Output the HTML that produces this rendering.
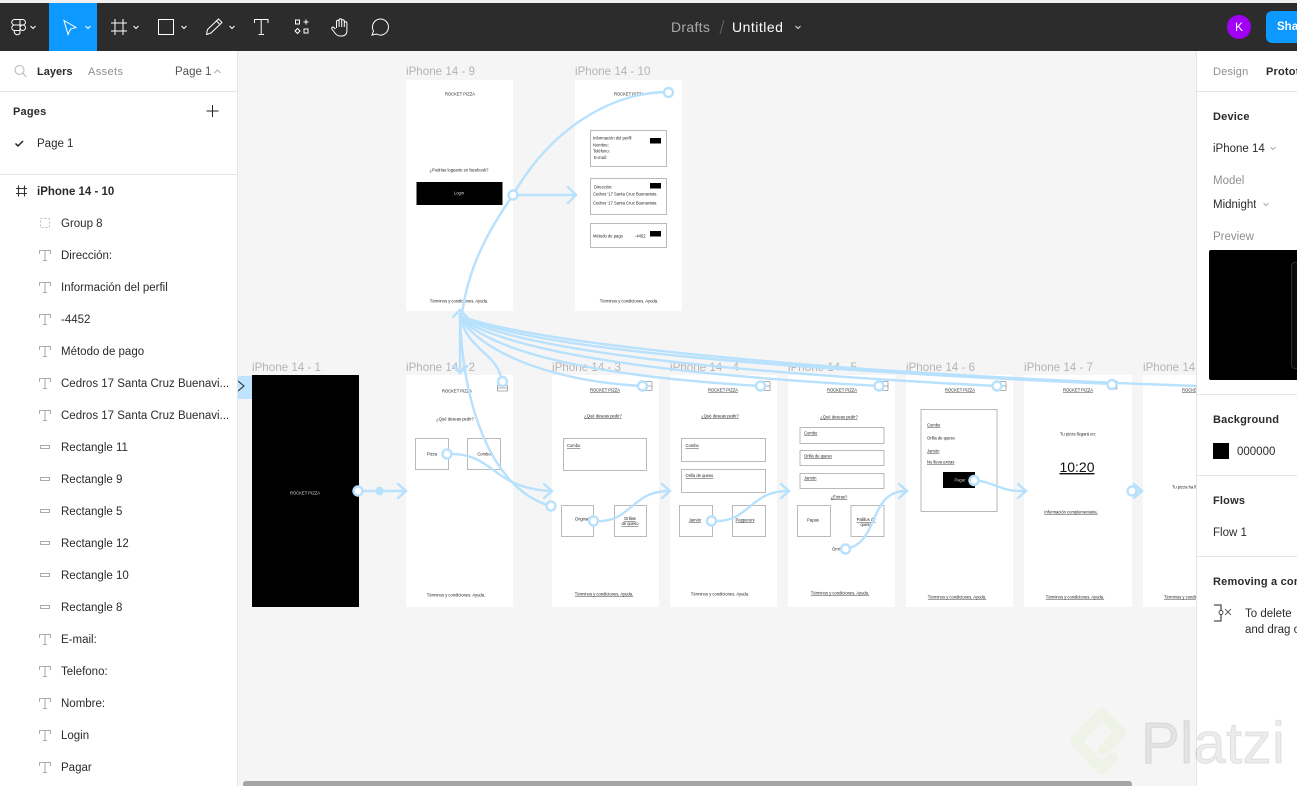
<!DOCTYPE html>
<html><head><meta charset="utf-8"><title>Untitled</title>
<style>
*{box-sizing:border-box}
html,body{margin:0;padding:0;width:1297px;height:786px;overflow:hidden;background:#f5f5f5;font-family:"Liberation Sans",sans-serif}
.a{position:absolute;white-space:nowrap;line-height:16px;font-size:11.5px;color:#2b2b2b;overflow:hidden}
.b{font-weight:bold;letter-spacing:.2px;font-size:11px}
.g{color:#8f8f8f}
.line{position:absolute;height:1px;background:#e5e5e5}
svg{position:absolute;left:0;top:0}
#c text{font-family:"Liberation Sans",sans-serif;font-size:4.15px;fill:#1c1c1c}
#c .m{text-anchor:middle}
#c .u{text-decoration:underline}
#c .l{font-size:11.6px;fill:#b4b4b4}
#c rect.f{fill:#fff}
#c rect.bx{fill:#fff;stroke:#a8a8a8;stroke-width:.8}
#w path{fill:none;stroke:#b7e1fd;stroke-width:2.4;stroke-linecap:round}
#w circle{fill:#fff;stroke:#b7e1fd;stroke-width:2.4}
</style></head><body>

<svg id="c" width="1297" height="786" viewBox="0 0 1297 786">
<rect width="1297" height="786" fill="#f5f5f5"/>
<text class="l" x="406" y="75">iPhone 14 - 9</text>
<text class="l" x="575" y="75">iPhone 14 - 10</text>
<text class="l" x="252" y="371">iPhone 14 - 1</text>
<text class="l" x="406" y="371">iPhone 14 - 2</text>
<text class="l" x="552" y="371">iPhone 14 - 3</text>
<text class="l" x="670" y="371">iPhone 14 - 4</text>
<text class="l" x="788" y="371">iPhone 14 - 5</text>
<text class="l" x="906" y="371">iPhone 14 - 6</text>
<text class="l" x="1024" y="371">iPhone 14 - 7</text>
<text class="l" x="1143" y="371">iPhone 14 - 8</text>
<rect class="f" x="406" y="80" width="107" height="231"/>
<rect class="f" x="575" y="80" width="107" height="231"/>
<rect x="252" y="375" width="107" height="232" fill="#000"/>
<rect class="f" x="406" y="375" width="107" height="232"/>
<rect class="f" x="552" y="375" width="107" height="232"/>
<rect class="f" x="670" y="375" width="107" height="232"/>
<rect class="f" x="788" y="375" width="107" height="232"/>
<rect class="f" x="906" y="375" width="107" height="232"/>
<rect class="f" x="1024" y="375" width="108" height="232"/>
<rect class="f" x="1143" y="375" width="107" height="232"/>

<!-- Frame 9 -->
<text class="m" x="460" y="95.500">ROCKET PIZZA</text>
<text class="m" x="459" y="171.500">¿Podrías logearte en facebook?</text>
<rect x="416.500" y="182" width="86" height="23" fill="#000"/>
<text class="m" x="459" y="194.500" style="fill:#ddd">Login</text>
<text class="m" x="459" y="302.500">Términos y condiciones. Ayuda.</text>
<!-- Frame 10 -->
<text class="m" x="629" y="95.500">ROCKET PIZZA</text>
<rect class="bx" x="590.500" y="130.500" width="76" height="36"/>
<rect class="bx" x="590.500" y="178.500" width="76" height="36"/>
<rect class="bx" x="590.500" y="223.500" width="76" height="24"/>
<rect x="650" y="138" width="11" height="5.500" fill="#000"/>
<rect x="650" y="183" width="11" height="5.500" fill="#000"/>
<rect x="650" y="231" width="11" height="5.500" fill="#000"/>
<text x="593" y="139.500">Información del perfil</text>
<text x="593" y="146.500">Nombre:</text>
<text x="593" y="152.500">Teléfono:</text>
<text x="594" y="159">E-mail:</text>
<text x="594" y="188.500">Dirección:</text>
<text x="593" y="195.500">Cedros '17 Santa Cruz Buenavista</text>
<text x="593" y="204.500">Cedros '17 Santa Cruz Buenavista</text>
<text x="593" y="237.500">Método de pago</text>
<text x="635" y="237.500">-4452</text>
<text class="m" x="629" y="302.500">Términos y condiciones. Ayuda.</text>
<!-- Frame 1 -->
<text class="m" x="305" y="494.500" style="fill:#ddd">ROCKET PIZZA</text>
<!-- Frame 2 -->
<text class="m" x="457" y="392.500">ROCKET PIZZA</text>
<text class="m" x="455" y="420.500">¿Qué deseas pedir?</text>
<rect class="bx" x="415.500" y="438.500" width="33" height="31"/>
<rect class="bx" x="467.500" y="438.500" width="33" height="31"/>
<text class="m" x="432" y="455.500">Pizza</text>
<text class="m" x="484" y="455.500">Combo</text>
<text class="m" x="456" y="596.500">Términos y condiciones. Ayuda.</text>
<path d="M497.500 385.500h10v5.500h-10zM497.500 388h10" fill="none" stroke="#999" stroke-width=".8"/>
<!-- Frame 3 -->
<text class="m u" x="605" y="391.500">ROCKET PIZZA</text>
<text class="m u" x="603" y="417.500">¿Qué deseas pedir?</text>
<rect class="bx" x="563.500" y="438.500" width="83" height="32"/>
<text class="u" x="567" y="447">Combo</text>
<rect class="bx" x="561.500" y="505.500" width="32" height="31"/>
<rect class="bx" x="614.500" y="505.500" width="32" height="31"/>
<text class="m" x="582" y="520.500">Original</text>
<text class="m u" x="630" y="520">Orillas</text>
<text class="m u" x="630" y="525">de queso</text>
<text class="m u" x="604" y="595.500">Términos y condiciones. Ayuda.</text>
<path d="M642 381.500h10M642 386h10M642 390.500h10M652 381.500v9" fill="none" stroke="#999" stroke-width=".8"/>
<!-- Frame 4 -->
<text class="m u" x="723" y="391.500">ROCKET PIZZA</text>
<text class="m u" x="720" y="417.500">¿Qué deseas pedir?</text>
<rect class="bx" x="681.500" y="438.500" width="84" height="23"/>
<rect class="bx" x="681.500" y="469.500" width="84" height="23"/>
<text class="u" x="685.500" y="447">Combo</text>
<text class="u" x="685.500" y="477">Orilla de queso</text>
<rect class="bx" x="679.500" y="505.500" width="33" height="31"/>
<rect class="bx" x="732.500" y="505.500" width="33" height="31"/>
<text class="m u" x="695" y="521.500">Jamón</text>
<text class="m u" x="745" y="521.500">Pepperoni</text>
<text class="m" x="720" y="595.500">Términos y condiciones. Ayuda.</text>
<path d="M760 381.500h10M760 386h10M760 390.500h10M770 381.500v9" fill="none" stroke="#999" stroke-width=".8"/>
<!-- Frame 5 -->
<text class="m u" x="842" y="391.500">ROCKET PIZZA</text>
<text class="m u" x="839" y="418.500">¿Qué deseas pedir?</text>
<rect class="bx" x="800" y="427.500" width="84" height="16"/>
<rect class="bx" x="800" y="450.500" width="84" height="15"/>
<rect class="bx" x="800" y="473.500" width="84" height="15"/>
<text class="u" x="804" y="434.500">Combo</text>
<text class="u" x="804" y="457.500">Orilla de queso</text>
<text class="u" x="804" y="479.500">Jamón</text>
<text class="m u" x="839" y="498.500">¿Extras?</text>
<rect class="bx" x="797.500" y="505.500" width="33" height="31"/>
<rect class="bx" x="851" y="505.500" width="33" height="31"/>
<text class="m" x="813" y="521.500">Papas</text>
<text class="m u" x="866" y="521">Palillos de</text>
<text class="m" x="866" y="526">queso</text>
<text x="832" y="550.500">Omit</text>
<text class="m u" x="840" y="594.500">Términos y condiciones. Ayuda.</text>
<path d="M878 381.500h10M878 386h10M878 390.500h10M888 381.500v9" fill="none" stroke="#999" stroke-width=".8"/>
<!-- Frame 6 -->
<text class="m u" x="960" y="391.500">ROCKET PIZZA</text>
<rect class="bx" x="921" y="409.500" width="76" height="102"/>
<text class="u" x="927" y="426.500">Combo</text>
<text x="927" y="439.500">Orilla de queso</text>
<text class="u" x="927" y="452.500">Jamón</text>
<text class="u" x="927" y="463.500">No lleva extras</text>
<rect x="943" y="472" width="32" height="16" fill="#000"/>
<text class="m" x="960" y="481.500" style="fill:#ccc">Pagar</text>
<text class="m u" x="957" y="598.500">Términos y condiciones. Ayuda.</text>
<path d="M996 381.500h10M996 386h10M996 390.500h10M1006 381.500v9" fill="none" stroke="#999" stroke-width=".8"/>
<!-- Frame 7 -->
<text class="m u" x="1078" y="391.500">ROCKET PIZZA</text>
<text class="m" x="1078" y="435.500">Tu pizza llegará en:</text>
<text class="m u" x="1077" y="472" style="font-size:14px;fill:#111">10:20</text>
<text class="m u" x="1071" y="513.500">Información complementaria.</text>
<text class="m u" x="1075" y="598.500">Términos y condiciones. Ayuda.</text>
<path d="M1108 381h9M1108 385h9M1108 389h9M1117 381v8" fill="none" stroke="#999" stroke-width=".8"/>
<!-- Frame 8 -->
<text x="1182" y="391.500" class="u">ROCKET PIZZA</text>
<text x="1172" y="488.500">Tu pizza ha llegado</text>
<text x="1164" y="598.500" class="u">Términos y condiciones. Ayuda.</text>
</svg>

<svg id="w" width="1297" height="786" viewBox="0 0 1297 786">
<!-- back wires -->
<path d="M460 316C468 352 498 352 502 382"/>
<path d="M460 318C485 356 560 382 643 386"/>
<path d="M460 318C500 358 620 378 761 386"/>
<path d="M460 318C510 352 660 374 880 386"/>
<path d="M460 317C520 350 720 372 997 386"/>
<path d="M460 316C530 350 800 370 1113 384"/>
<path d="M460 316C540 346 850 374 1197 386"/>
<!-- 9 to back, 9 to 10 -->
<path d="M513 195C485 235 468 270 462 314"/>
<path d="M513 195C550 130 610 92 669 92"/>
<path d="M513 195H576"/><path d="M568 187l8 8-8 8"/>
<path d="M453 317l7-7 7 7"/>
<!-- vertical -->
<path d="M460 314V373"/><path d="M453 366l7 7 7-7"/>
<path d="M460 316C462 400 490 490 551 506"/>
<!-- forwards -->
<path d="M358 491H405"/><path d="M398 484l8 7-8 7"/>
<path d="M447 454C495 452 490 488 551 491"/><path d="M544 484l8 7-8 7"/>
<path d="M593 521C632 524 630 491 669 491"/><path d="M662 484l8 7-8 7"/>
<path d="M711 521C750 524 748 491 788 491"/><path d="M781 484l8 7-8 7"/>
<path d="M845 549C880 544 868 491 906 491"/><path d="M899 484l8 7-8 7"/>
<path d="M974 480C995 482 1000 492 1025 491"/><path d="M1018 484l8 7-8 7"/>
<path d="M1132 491H1140"/><path d="M1134 484l8 7-8 7"/>
<circle cx="358" cy="491" r="4.500"/>
<circle cx="379.500" cy="491" r="3" style="fill:#b7e1fd"/>
<circle cx="447" cy="454" r="4.500"/>
<circle cx="502.500" cy="381.500" r="4.500"/>
<circle cx="551" cy="506" r="4.500"/>
<circle cx="593.500" cy="521" r="4.500"/>
<circle cx="642.500" cy="386" r="4.500"/>
<circle cx="711.500" cy="521" r="4.500"/>
<circle cx="760.500" cy="386" r="4.500"/>
<circle cx="845.500" cy="549" r="4.500"/>
<circle cx="879" cy="386" r="4.500"/>
<circle cx="974" cy="480.500" r="4.500"/>
<circle cx="997" cy="386" r="4.500"/>
<circle cx="1112" cy="384.500" r="4.500"/>
<circle cx="1132" cy="491" r="4.500"/>
<circle cx="513" cy="195" r="4.500"/>
<circle cx="668.500" cy="92.500" r="4.500"/>
</svg>

<!-- start flow marker -->
<div style="position:absolute;left:238px;top:376px;width:14px;height:23px;background:#bde3ff"></div>
<svg width="1297" height="786" style="pointer-events:none"><path d="M238 381l6 5-6 5" fill="none" stroke="#222" stroke-width="1"/></svg>

<!-- scrollbar -->
<div style="position:absolute;left:243px;top:781px;width:889px;height:5px;background:#a5a5a5;border-radius:3px 3px 0 0"></div>

<!-- Left panel -->
<div style="position:absolute;left:0;top:51px;width:238px;height:735px;background:#fff;border-right:1px solid #e5e5e5"></div>
<div class="line" style="left:0;top:91px;width:237px"></div>
<div class="line" style="left:0;top:174px;width:237px"></div>
<svg width="240" height="786">
<g fill="none" stroke="#b3b3b3" stroke-width="1"><circle cx="19.500" cy="70" r="4.500"/><path d="M23 73.500l3.500 3.500"/></g>
<path d="M212.500 105v12M206.500 111h12" stroke="#222" stroke-width="1" fill="none"/>
<path d="M15.500 143.500l2.500 2.500 5-5" stroke="#222" stroke-width="1.500" fill="none"/>
<path d="M214.500 73l3-3 3 3" stroke="#aaa" stroke-width="1" fill="none"/>
<path d="M18.500 185.500v11M24.500 185.500v11M16 188.500h11M16 193.500h11" stroke="#333" stroke-width="1.100" fill="none"/>
<rect x="40.500" y="218.500" width="9" height="9" fill="none" stroke="#bbb" stroke-dasharray="2 2"/>
<g fill="none" stroke="#aaa" stroke-width="1">
<path d="M39.500 254v-3.500h11v3.500M45 250.500v10M43 260.500h4"/>
<path d="M39.500 286v-3.500h11v3.500M45 282.500v10M43 292.500h4"/>
<path d="M39.500 318v-3.500h11v3.500M45 314.500v10M43 324.500h4"/>
<path d="M39.500 350v-3.500h11v3.500M45 346.500v10M43 356.500h4"/>
<path d="M39.500 382v-3.500h11v3.500M45 378.500v10M43 388.500h4"/>
<path d="M39.500 414v-3.500h11v3.500M45 410.500v10M43 420.500h4"/>
<path d="M39.500 638v-3.500h11v3.500M45 634.500v10M43 644.500h4"/>
<path d="M39.500 670v-3.500h11v3.500M45 666.500v10M43 676.500h4"/>
<path d="M39.500 702v-3.500h11v3.500M45 698.500v10M43 708.500h4"/>
<path d="M39.500 734v-3.500h11v3.500M45 730.500v10M43 740.500h4"/>
<path d="M39.500 766v-3.500h11v3.500M45 762.500v10M43 772.500h4"/>
<rect x="40.500" y="445.500" width="9" height="3"/>
<rect x="40.500" y="477.500" width="9" height="3"/>
<rect x="40.500" y="509.500" width="9" height="3"/>
<rect x="40.500" y="541.500" width="9" height="3"/>
<rect x="40.500" y="573.500" width="9" height="3"/>
<rect x="40.500" y="605.500" width="9" height="3"/>
</g>
</svg>
<div class="a b" style="left:37px;top:64px;letter-spacing:0">Layers</div>
<div class="a g" style="left:88px;top:64px;font-size:11px;letter-spacing:.4px">Assets</div>
<div class="a" style="left:175px;top:64px;color:#555">Page 1</div>
<div class="a b" style="left:13px;top:104px">Pages</div>
<div class="a" style="left:37px;top:136px">Page 1</div>
<div class="a" style="left:37px;top:184px;font-weight:bold">iPhone 14 - 10</div>
<div class="a" style="left:61px;top:216px">Group 8</div>
<div class="a" style="left:61px;top:248px">Dirección:</div>
<div class="a" style="left:61px;top:280px">Información del perfil</div>
<div class="a" style="left:61px;top:312px">-4452</div>
<div class="a" style="left:61px;top:344px">Método de pago</div>
<div class="a" style="left:61px;top:376px">Cedros 17 Santa Cruz Buenavi...</div>
<div class="a" style="left:61px;top:408px">Cedros 17 Santa Cruz Buenavi...</div>
<div class="a" style="left:61px;top:440px">Rectangle 11</div>
<div class="a" style="left:61px;top:472px">Rectangle 9</div>
<div class="a" style="left:61px;top:504px">Rectangle 5</div>
<div class="a" style="left:61px;top:536px">Rectangle 12</div>
<div class="a" style="left:61px;top:568px">Rectangle 10</div>
<div class="a" style="left:61px;top:600px">Rectangle 8</div>
<div class="a" style="left:61px;top:632px">E-mail:</div>
<div class="a" style="left:61px;top:664px">Telefono:</div>
<div class="a" style="left:61px;top:696px">Nombre:</div>
<div class="a" style="left:61px;top:728px">Login</div>
<div class="a" style="left:61px;top:760px">Pagar</div>

<!-- Right panel -->
<div style="position:absolute;left:1196px;top:51px;width:101px;height:735px;background:#fff;border-left:1px solid #e5e5e5"></div>
<div class="line" style="left:1197px;top:91px;width:100px"></div>
<div class="line" style="left:1197px;top:394px;width:100px"></div>
<div class="line" style="left:1197px;top:475px;width:100px"></div>
<div class="line" style="left:1197px;top:556px;width:100px"></div>
<div class="a g" style="left:1213px;top:64px;font-size:11px;letter-spacing:.2px">Design</div>
<div class="a b" style="left:1266px;top:64px;width:31px">Prototype</div>
<div class="a b" style="left:1213px;top:109px">Device</div>
<div class="a" style="left:1213px;top:141px">iPhone 14</div>
<div class="a g" style="left:1213px;top:173px">Model</div>
<div class="a" style="left:1213px;top:197px">Midnight</div>
<div class="a g" style="left:1213px;top:229px">Preview</div>
<div style="position:absolute;left:1209px;top:250px;width:88px;height:130px;background:#000;border-radius:2px 0 0 2px"></div>
<div style="position:absolute;left:1291px;top:262px;width:6px;height:107px;border:1px solid #2a2d33;border-right:0;border-radius:4px 0 0 4px;background:#0a0a0c"></div>
<div class="a b" style="left:1213px;top:412px">Background</div>
<div style="position:absolute;left:1213px;top:443px;width:16px;height:16px;background:#000"></div>
<div class="a" style="left:1237px;top:444px">000000</div>
<div class="a b" style="left:1213px;top:493px">Flows</div>
<div class="a" style="left:1213px;top:525px">Flow 1</div>
<div class="a b" style="left:1213px;top:574px;width:84px">Removing a connection</div>
<div class="a" style="left:1245px;top:606px;width:52px">To delete</div>
<div class="a" style="left:1245px;top:622px;width:52px">and drag off</div>
<svg width="1297" height="786">
<g fill="none" stroke="#aaa"><path d="M1270.500 147l2.500 2.500 2.500-2.500M1263.500 203l2.500 2.500 2.500-2.500"/></g>
<path d="M1214 605h7v16h-7M1221 605v16" fill="none" stroke="#222"/>
<circle cx="1221" cy="612.500" r="2" fill="#fff" stroke="#222" stroke-width=".8"/>
<path d="M1225 609l6 6M1231 609l-6 6" stroke="#333" stroke-width=".8"/>
</svg>

<!-- Top bar -->
<div style="position:absolute;left:0;top:0;width:1297px;height:3px;background:#f1f1f1"></div>
<div style="position:absolute;left:0;top:3px;width:1297px;height:48px;background:#2c2c2c"></div>
<div style="position:absolute;left:49px;top:3px;width:48px;height:48px;background:#0d99ff"></div>
<svg width="1297" height="52">
<g fill="none" stroke="#fff" stroke-width="1">
<!-- figma logo -->
<path d="M14.500 19.500h5.500v5.500h-5.500a2.750 2.750 0 0 1 0-5.500zM20 19.500h2.700a2.750 2.750 0 0 1 0 5.500H20zM14.500 25H20v5.500h-5.500a2.750 2.750 0 0 1 0-5.500zM25.500 27.750a2.750 2.750 0 1 1-5.500 0 2.750 2.750 0 0 1 5.500 0zM14.500 30.500H20v2.500a2.750 2.750 0 1 1-5.500-2.500z"/>
<path d="M30.500 26l2.500 2.500 2.500-2.500M85.500 26l2.500 2.500 2.500-2.500M133.500 26l2.500 2.500 2.500-2.500M181.500 26l2.500 2.500 2.500-2.500M229.500 26l2.500 2.500 2.500-2.500"/>
<!-- cursor -->
<path d="M64 20.500l12 7-5.500 1.500-2.500 5.500z"/>
<!-- frame -->
<path d="M115 19v16M123 19v16M111 23h16M111 31h16"/>
<!-- rect -->
<rect x="158.500" y="19.500" width="15" height="15"/>
<!-- pen -->
<path d="M206.500 34.500l1-5 11-10.500 3.500 3.500-11 10.500zM216 20.500l3.500 3.500"/>
<!-- T -->
<path d="M254.500 23v-3.500h13.500V23M261.200 19.500v15M258.500 34.500h5.500"/>
<!-- resources -->
<rect x="295.500" y="20" width="4" height="4"/>
<path d="M306 19.500v5M303.500 22h5"/>
<path d="M297.500 28.500l2.500 2.500-2.500 2.500-2.500-2.500z"/>
<rect x="304" y="29" width="4" height="4"/>
<!-- hand -->
<path d="M336.500 28V21.500a1.300 1.300 0 0 1 2.600 0V27M339.100 27v-7a1.300 1.300 0 0 1 2.600 0v7M341.700 27v-6a1.300 1.300 0 0 1 2.600 0v6M344.300 27v-4a1.300 1.300 0 0 1 2.600 0v8c0 3-2 5-5 5h-2c-2 0-3.500-1-5-3l-3-4c-.8-1.500 1-2.500 2-1.500l1.600 1.500"/>
<!-- comment -->
<path d="M372 35l1.500-4a8 8 0 1 1 3 3z"/>
</g>
<path d="M795.500 26l2.500 2.500 2.500-2.500" fill="none" stroke="#ddd"/>
<path d="M720 34l4-14" stroke="#666" fill="none"/>
</svg>
<div class="a" style="left:671px;top:19px;font-size:14px;color:#a9a9a9;letter-spacing:.3px">Drafts</div>
<div class="a" style="left:732px;top:19px;font-size:14px;color:#fff;letter-spacing:.5px">Untitled</div>
<div style="position:absolute;left:1227px;top:15px;width:24px;height:24px;border-radius:50%;background:#a100f5;color:#fff;font-size:12px;line-height:24px;text-align:center">K</div>
<div style="position:absolute;left:1266px;top:11px;width:31px;height:32px;border-radius:6px 0 0 6px;background:#0d99ff;color:#fff;font-size:11.500px;font-weight:bold;line-height:32px;padding-left:11px;overflow:hidden;white-space:nowrap">Share</div>

<!-- Watermark -->
<svg width="1297" height="786">
<path d="M1103 750L1121 733L1102 714L1076 741L1102 769L1113 758" fill="none" stroke="#eff2e6" stroke-width="11" stroke-linejoin="round" stroke-linecap="round"/>
<text x="1141" y="763" style="font-family:'Liberation Sans',sans-serif;font-size:58px;fill:#8c8c8c;fill-opacity:.17;stroke:#8c8c8c;stroke-opacity:.17;stroke-width:1.200;letter-spacing:.4px">Platzi</text>
</svg>
</body></html>
